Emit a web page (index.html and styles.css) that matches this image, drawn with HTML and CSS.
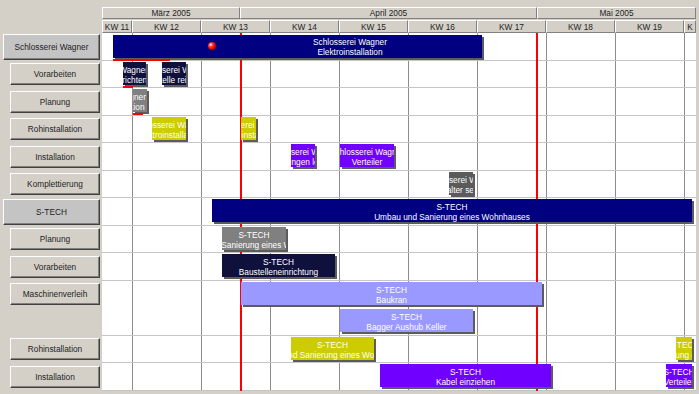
FILE: index.html
```html
<!DOCTYPE html>
<html lang="de">
<head>
    <meta charset="UTF-8">
    <title>Bauplanung Gantt</title>
    <link rel="stylesheet" href="styles.css">
</head>
<body>
    <div class="gantt">
        <div class="head">
            <div class="corner"></div>
            <div class="timeline">
                <div class="months">
                    <div class="month">März 2005</div>
                    <div class="month">April 2005</div>
                    <div class="month">Mai 2005</div>
                </div>
                <div class="weeks">
                    <div class="week">KW 11</div>
                    <div class="week">KW 12</div>
                    <div class="week">KW 13</div>
                    <div class="week">KW 14</div>
                    <div class="week">KW 15</div>
                    <div class="week">KW 16</div>
                    <div class="week">KW 17</div>
                    <div class="week">KW 18</div>
                    <div class="week">KW 19</div>
                    <div class="week">K</div>
                </div>
            </div>
        </div>

        <div class="body">
            <!-- resource names -->
            <div class="labels">
                <div class="label group"><button class="btn">Schlosserei Wagner</button></div>
                <div class="label"><button class="btn">Vorarbeiten</button></div>
                <div class="label"><button class="btn">Planung</button></div>
                <div class="label"><button class="btn">Rohinstallation</button></div>
                <div class="label"><button class="btn">Installation</button></div>
                <div class="label"><button class="btn">Komplettierung</button></div>
                <div class="label group"><button class="btn">S-TECH</button></div>
                <div class="label"><button class="btn">Planung</button></div>
                <div class="label"><button class="btn">Vorarbeiten</button></div>
                <div class="label tall"><button class="btn">Maschinenverleih</button></div>
                <div class="label"><button class="btn">Rohinstallation</button></div>
                <div class="label"><button class="btn">Installation</button></div>
            </div>

            <!-- tasks -->
            <div class="chart">
                <div class="row">
                    <div class="bar navy first" style="left:11px; width:369px; --cx:237px">
                        <span class="dot"></span>
                        <span class="txt">Schlosserei Wagner<br>Elektroinstallation</span>
                    </div>
                    <div class="progress" style="left:11px; width:57px; top:26px"></div>
                </div>
                <div class="row">
                    <div class="bar night" style="left:21px; width:23px; --cx:-12px">
                        <span class="txt">Schlosserei Wagner<br>Baustelle einrichten</span>
                    </div>
                    <div class="progress" style="left:21px; width:10px; top:25px"></div>
                    <div class="bar night" style="left:60px; width:24px">
                        <span class="txt">Schlosserei Wagner<br>Baustelle reinigen</span>
                    </div>
                </div>
                <div class="row">
                    <div class="bar gray" style="left:31px; width:14px; --cx:-24px">
                        <span class="txt">Schlosserei Wagner<br>Projektkoordination</span>
                    </div>
                    <div class="progress" style="left:31px; width:10px; top:25px"></div>
                </div>
                <div class="row">
                    <div class="bar olive" style="left:50px; width:34px">
                        <span class="txt">Schlosserei Wagner<br>Elektroinstallation</span>
                    </div>
                    <div class="bar olive" style="left:139px; width:15px">
                        <span class="txt">Schlosserei Wagner<br>Elektroinstallation</span>
                    </div>
                </div>
                <div class="row">
                    <div class="bar violet" style="left:189px; width:24px">
                        <span class="txt">Schlosserei Wagner<br>Leitungen legen</span>
                    </div>
                    <div class="bar violet" style="left:238px; width:54px">
                        <span class="txt">Schlosserei Wagner<br>Verteiler</span>
                    </div>
                </div>
                <div class="row">
                    <div class="bar slate" style="left:347px; width:24px">
                        <span class="txt">Schlosserei Wagner<br>Schalter setzen</span>
                    </div>
                </div>
                <div class="row">
                    <div class="bar navy" style="left:110px; width:480px">
                        <span class="txt">S-TECH<br>Umbau und Sanierung eines Wohnhauses</span>
                    </div>
                </div>
                <div class="row">
                    <div class="bar gray" style="left:120px; width:64px">
                        <span class="txt">S-TECH<br>Umbau und Sanierung eines Wohnhauses</span>
                    </div>
                </div>
                <div class="row">
                    <div class="bar night" style="left:120px; width:113px">
                        <span class="txt">S-TECH<br>Baustelleneinrichtung</span>
                    </div>
                </div>
                <div class="row tall">
                    <div class="bar lilac" style="left:139px; width:301px">
                        <span class="txt">S-TECH<br>Baukran</span>
                    </div>
                    <div class="bar lilac lower" style="left:238px; width:133px">
                        <span class="txt">S-TECH<br>Bagger Aushub Keller</span>
                    </div>
                </div>
                <div class="row">
                    <div class="bar olive" style="left:189px; width:83px">
                        <span class="txt">S-TECH<br>Umbau und Sanierung eines Wohnhauses</span>
                    </div>
                    <div class="bar olive" style="left:574px; width:16px">
                        <span class="txt">S-TECH<br>Umbau und Sanierung eines Wohnhauses</span>
                    </div>
                </div>
                <div class="row">
                    <div class="bar violet" style="left:278px; width:171px">
                        <span class="txt">S-TECH<br>Kabel einziehen</span>
                    </div>
                    <div class="bar violet" style="left:564px; width:26px">
                        <span class="txt">S-TECH<br>Verteiler</span>
                    </div>
                </div>
            </div>
        </div>
    </div>
</body>
</html>
```

FILE: styles.css
```css
body {
    margin: 0;
    background-color: #d4d0c8;
    font-family: "Liberation Sans", Arial, sans-serif;
    font-size: 8.3px;
    color: #1e1e1e;
}
.gantt {
    width: 699px;
    height: 394px;
    overflow: hidden;
}

/* timeline header */
.head {
    display: flex;
    height: 33px;
}
.corner {
    width: 102px;
    flex: none;
}
.timeline {
    width: 594px;
    padding-top: 7px;
    box-sizing: border-box;
}
.months {
    display: grid;
    grid-template-columns: 138px 297px 159px;
    height: 12px;
    margin-bottom: 1px;
}
.weeks {
    display: grid;
    grid-template-columns: 30px repeat(8, 69px) 1fr;
    height: 13px;
}
.month,
.week {
    display: flex;
    align-items: center;
    justify-content: center;
    box-sizing: border-box;
    border: 1px solid;
    border-color: #ffffff #808080 #808080 #ffffff;
    background-color: #d4d0c8;
    white-space: nowrap;
    overflow: hidden;
}

/* resource column */
.body {
    display: flex;
}
.labels {
    width: 102px;
    flex: none;
}
.label {
    display: flex;
    align-items: center;
    height: 27.5px;
}
.label.tall {
    height: 55px;
    align-items: flex-start;
    padding-top: 2px;
    box-sizing: border-box;
}
.btn {
    font: inherit;
    color: inherit;
    margin: 0 0 0 10px;
    padding: 0;
    width: 90px;
    height: 22px;
    background-color: #d4d0c8;
    border: 1px solid;
    border-color: #ffffff #404040 #404040 #ffffff;
    box-shadow: inset -1px -1px 0 #808080;
    white-space: nowrap;
}
.label.group .btn {
    margin-left: 3px;
    width: 97px;
    height: 26px;
    background-color: #c4c4c4;
}

/* chart area */
.chart {
    width: 594px;
    flex: none;
    position: relative;
    overflow: hidden;
    background-color: #ffffff;
    background-image: repeating-linear-gradient(90deg, #8c8c8c 0 1px, transparent 1px 69px);
    background-position: 30px 0;
}
/* today + month end markers */
.chart::after {
    content: "";
    position: absolute;
    top: 0;
    bottom: 0;
    left: 138px;
    width: 2px;
    background-color: #ff0000;
    box-shadow: 296px 0 0 #ff0000;
    z-index: 1;
}
.row {
    position: relative;
    height: 27.5px;
    border-bottom: 1px solid #c4c4c4;
    box-sizing: border-box;
}
.row.tall {
    height: 55px;
}
.bar {
    position: absolute;
    top: 1px;
    height: 23px;
    overflow: hidden;
    color: #ffffff;
    box-shadow: 2px 2px 0 #5c5c5c;
    z-index: 2;
}
.bar.first {
    top: 2px;
}
.bar.lower {
    top: 28px;
}
.txt {
    position: absolute;
    top: 3px;
    left: var(--cx, 50%);
    transform: translateX(-50%);
    white-space: nowrap;
    text-align: center;
    line-height: 10px;
}
.first .txt {
    top: 2px;
}
.navy { background-color: #000080; }
.night { background-color: #10103c; }
.gray { background-color: #808080; }
.olive { background-color: #cccc00; }
.violet { background-color: #7000ff; }
.slate { background-color: #5a5a5a; }
.lilac { background-color: #9999ff; }

.progress {
    position: absolute;
    height: 2px;
    background-color: #ff0000;
    z-index: 2;
}
.dot {
    position: absolute;
    left: 95px;
    top: 7px;
    width: 8px;
    height: 8px;
    border-radius: 50%;
    background: radial-gradient(circle at 35% 35%, #ffffff 0, #ff4040 25%, #d00000 60%, #800000 100%);
}
```
